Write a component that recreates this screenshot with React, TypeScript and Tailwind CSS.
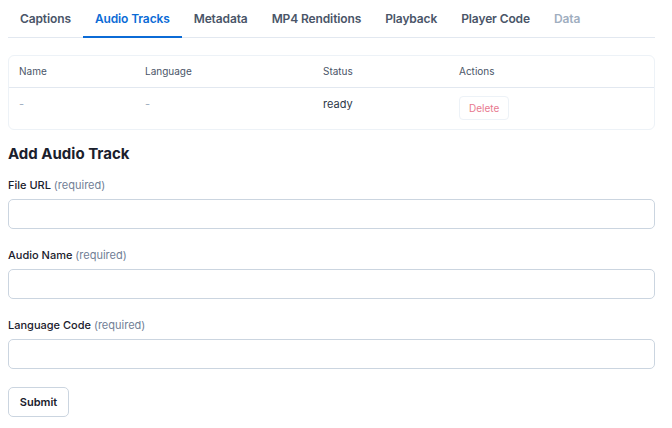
import React from "react";

const tabs = ["Captions", "Audio Tracks", "Metadata", "MP4 Renditions", "Playback", "Player Code", "Data"];

function Field({ label }: { label: string }) {
  return (
    <div className="flex flex-col">
      <label className="h-[14px] text-[11px] font-medium leading-[14px] text-[#1a202c]">
        {label} <span className="font-normal text-[#718096]">(required)</span>
      </label>
      <input className="mt-[7px] h-[30px] w-full rounded-[5px] border border-[#cbd5e0] bg-white outline-none" />
    </div>
  );
}

export default function App() {
  return (
    <div className="min-h-[428px] bg-white" style={{ fontFamily: "Inter, 'Liberation Sans', sans-serif" }}>
      <div className="ml-2 w-[647px] text-[#1a202c]">
        <div className="flex h-[38px] border-b border-[#e2e8f0]">
          {tabs.map((t) => {
            const active = t === "Audio Tracks";
            const disabled = t === "Data";
            return (
              <div
                key={t}
                className={
                  "flex h-[38px] items-center px-3 text-[12px] font-semibold tracking-[-0.12px] " +
                  (active
                    ? "border-b-2 border-[#0b6bd6] pt-[1px] text-[#0b6bd6]"
                    : disabled
                    ? "pb-[1px] text-[#a0aec0]"
                    : "pb-[1px] text-[#4a5568]")
                }
              >
                {t}
              </div>
            );
          })}
        </div>

        <div className="mt-[17px] rounded-[6px] border border-[#edf2f7] text-[10px]">
          <div className="grid h-[32px] grid-cols-[126px_178px_136px_1fr] items-center border-b border-[#e2e8f0] text-[#4a5568]">
            <div className="pl-[10px]">Name</div>
            <div className="pl-[10px]">Language</div>
            <div className="pl-[10px]">Status</div>
            <div className="pl-[10px]">Actions</div>
          </div>
          <div className="grid h-[41px] grid-cols-[126px_178px_136px_1fr] items-start pt-[8px] text-[11px]">
            <div className="pl-[10px] text-[#a0aec0]">-</div>
            <div className="pl-[10px] text-[#a0aec0]">-</div>
            <div className="pl-[10px] text-[#2d3748]">ready</div>
            <div className="pl-[10px]">
              <button className="h-[24px] rounded-[4px] border border-[#edf2f7] px-[9px] text-[10px] text-[#e8798f]">
                Delete
              </button>
            </div>
          </div>
        </div>

        <h2 className="mt-[14px] text-[15px] font-bold leading-[20px] text-[#1a202c]">Add Audio Track</h2>

        <div className="mt-[14px] flex flex-col gap-[19px]">
          <Field label="File URL" />
          <Field label="Audio Name" />
          <Field label="Language Code" />
        </div>

        <button className="mt-[18px] h-[30px] w-[61px] rounded-[5px] border border-[#cbd5e0] bg-white text-[11px] font-semibold text-[#1a202c]">
          Submit
        </button>
      </div>
    </div>
  );
}
